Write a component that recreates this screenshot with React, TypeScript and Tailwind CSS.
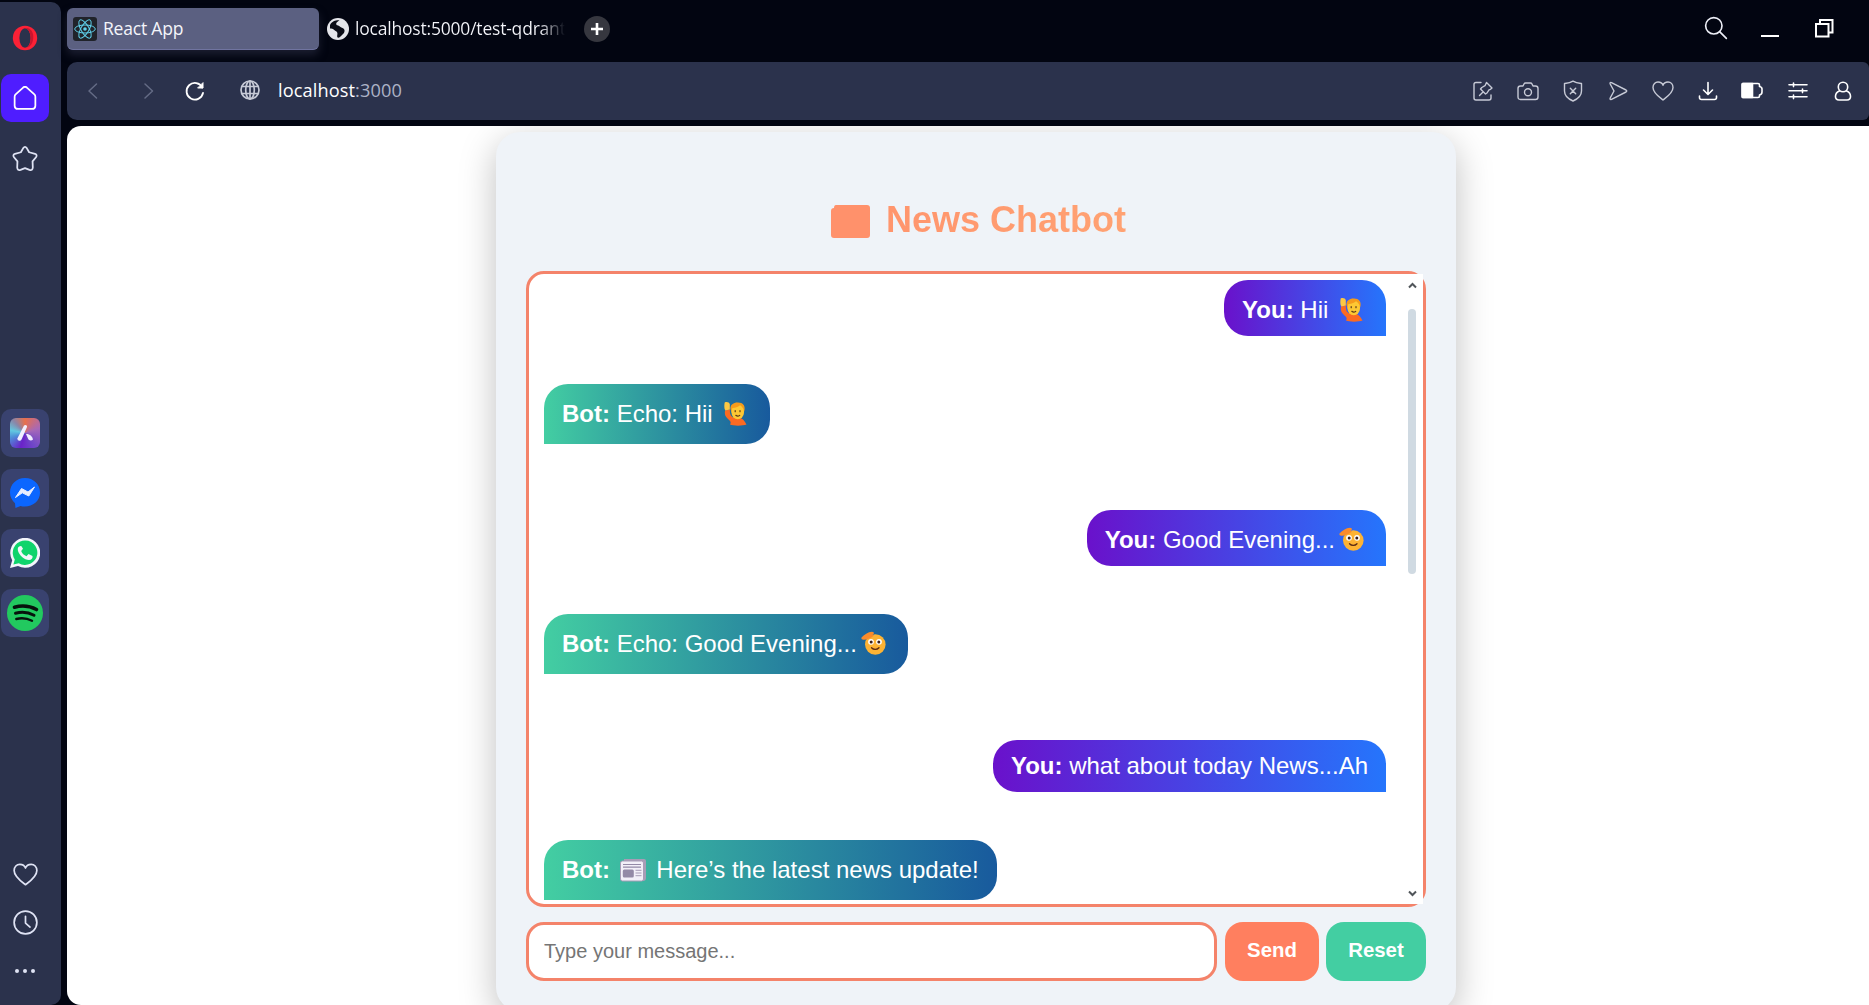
import type { ReactNode } from 'react';

type IconProps = { className?: string; size?: number; w?: number; children: ReactNode };

const Icon = ({ className = '', size = 22, w = 1.5, children }: IconProps) => (
  <svg
    className={'shrink-0 ' + className}
    width={size}
    height={size}
    viewBox="0 0 22 22"
    fill="none"
    stroke="currentColor"
    strokeWidth={w}
    strokeLinecap="round"
    strokeLinejoin="round"
  >
    {children}
  </svg>
);

const Heart = () => (
  <path d="M11 20C7.500 17.300 1 13 1 7.500C1 4.200 3.300 2 6 2C8.500 2 10.300 3.300 11 5.300C11.700 3.300 13.500 2 16 2C18.700 2 21 4.200 21 7.500C21 13 14.500 17.300 11 20Z" />
);

const OperaLogo = () => (
  <svg width="26" height="26" viewBox="0 0 26 26">
    <ellipse cx="13" cy="13" rx="12.200" ry="12.200" fill="#fb2136" />
    <ellipse cx="13" cy="13" rx="5.600" ry="9.800" fill="#2b324c" />
    <path d="M13 3.200C17 2.500 20 5 21 9C22 15 20 21 15.500 22.500C18 20 18.600 16.500 18.600 13C18.600 8.500 17 4 13 3.200Z" fill="#c9152e" />
  </svg>
);

const AriaLogo = () => (
  <div className="flex size-[30px] items-center justify-center rounded-[6px] bg-[conic-gradient(from_0deg,#e8704c,#a668b8_20%,#7048c8_40%,#6a22c8_55%,#4f8fd8_70%,#62c8e0_78%,#8a86a8_88%,#e8704c)]">
    <svg width="18" height="18" viewBox="0 0 18 18" fill="#f1efff">
      <path d="M8 1.500C9 .3 11.500 1 11 3L5.500 15.500C4.500 17.500 1 17 1.500 14.200Z" />
      <path d="M10 10C13 9.500 16.500 12 17 15.500C15.500 17.200 12.500 16.500 12 14.500Z" />
    </svg>
  </div>
);

const MessengerLogo = () => (
  <svg width="30" height="30" viewBox="0 0 30 30">
    <path d="M15 0C6.500 0 0 6.200 0 14.500C0 19 2 22.500 5 25.200L5.500 30L10.500 28C20 30.500 30 24.500 30 14.500C30 6.200 23.500 0 15 0Z" fill="#0b66ff" />
    <path d="M5.500 19.500L11.500 10.500L18 14L24.500 9L18.800 18L12.300 14.800Z" fill="#e8eeff" stroke="#e8eeff" strokeLinejoin="round" />
  </svg>
);

const WhatsAppLogo = () => (
  <svg width="30" height="30" viewBox="0 0 30 30">
    <path d="M0 30L2.200 22.300A15 15 0 1 1 8 28Z" fill="#f3f5fb" />
    <path d="M3.400 26.600L4.800 21.500A12.300 12.300 0 1 1 8.800 25.300Z" fill="#0fd46c" />
    <path d="M10.500 8C8.500 8.200 7.500 10 7.800 12C8.800 17.500 14.500 21.800 19 22C21.500 22 23 20 22.500 18L18.500 16L16.500 18.300C14 17.300 12 15.300 11.200 13L13 10.800L11.500 8.200Z" fill="#f3f5fb" />
  </svg>
);

const SpotifyLogo = () => (
  <svg width="36" height="36" viewBox="0 0 36 36" fill="none" stroke="#07130c" strokeLinecap="round">
    <circle cx="18" cy="18" r="18" fill="#22c95f" stroke="none" />
    <path d="M7.500 12.200C15 10.200 23 11 29.500 14.500" strokeWidth="3.600" />
    <path d="M8.500 18.300C15 16.500 21.500 17.300 27 20.300" strokeWidth="3" />
    <path d="M9.300 24C15 22.600 20 23.200 25 25.800" strokeWidth="2.400" />
  </svg>
);

const ReactLogo = () => (
  <svg className="shrink-0" width="24" height="24" viewBox="0 0 24 24" fill="none" stroke="#5fd0ea" strokeWidth="1">
    <rect width="24" height="24" rx="3" fill="#20232a" stroke="none" />
    <ellipse cx="12" cy="12" rx="10.300" ry="4" />
    <ellipse cx="12" cy="12" rx="10.300" ry="4" transform="rotate(60 12 12)" />
    <ellipse cx="12" cy="12" rx="10.300" ry="4" transform="rotate(120 12 12)" />
    <circle cx="12" cy="12" r="1.800" fill="#5fd0ea" stroke="none" />
  </svg>
);

const EarthIcon = () => (
  <svg className="shrink-0" width="22" height="22" viewBox="0 0 22 22">
    <circle cx="11" cy="11" r="11" fill="#e4e5ea" />
    <path d="M3 7C5 3 9 2 12.500 2.300C10 4 8.500 5 9.500 7C12 7.500 13 9 15.500 10C18.500 11 18 15 15.500 16.500C13.500 19 12 20 10.500 19.500C9.500 17.500 11.500 15.500 9.500 13.500C7 12 6.500 10.500 3 10.500Z" fill="#0a0c16" />
  </svg>
);

const Emoji = ({ children }: { children: ReactNode }) => (
  <span className="inline-flex h-6 w-[33px] items-center justify-center align-[-4px]">{children}</span>
);

const RaisingHand = () => (
  <Emoji>
    <svg className="shrink-0" width="25" height="25" viewBox="0 0 25 25">
      <path d="M2 9.500L7 8.500C6.500 12 7.500 15.500 10.500 16.500H16C20 17.500 21.500 20 23.500 23.500C20 25 10 25 7 23.500C8.500 21.500 7.500 20 5 18C2 15.500 1.500 13 2 9.500Z" fill="#fb6a22" />
      <path d="M1.700 1.500C3.500 .5 6.300 1 6.800 3.500V8.500L2.300 9.500C.8 7 1.300 3.500 1.700 1.500Z" fill="#fcc843" />
      <path d="M7.500 8C7 3.500 11 1.300 15 1.500C20 1.700 22.300 4.500 21.500 9L20 14H9.500Z" fill="#f59b1c" />
      <ellipse cx="14.700" cy="11" rx="6.300" ry="7.300" fill="#fdc834" />
      <path d="M9 7C13 7 16 5.500 17.500 3.500C19 6 20 7 21 7.500L20 3.500L13 1.800L8.500 4.500Z" fill="#f59b1c" />
      <path d="M12.200 9.500v1.200M17 9.500v1.200M12.800 14.300C14 15.300 15.700 15.300 16.700 14.300" stroke="#5b3a1a" strokeWidth="1.200" fill="none" strokeLinecap="round" />
    </svg>
  </Emoji>
);

const SaluteFace = () => (
  <Emoji>
    <svg className="shrink-0" width="25" height="25" viewBox="0 0 25 25">
      <circle cx="14.300" cy="13.500" r="10.300" fill="#fdb334" />
      <path d="M.5 6.500C3 3.500 7 1 11 .7C13.500 .8 13.500 3 11.500 3.500L13 4.500C10 7 6 9 2.500 8.800C1 8.700 0 8 .5 6.500Z" fill="#fb8b2a" />
      <circle cx="10" cy="10.800" r="2.900" fill="#fff" />
      <circle cx="18" cy="10.800" r="2.900" fill="#fff" />
      <circle cx="10.200" cy="10.900" r="1.500" fill="#3a1f1a" />
      <circle cx="17.800" cy="10.900" r="1.500" fill="#3a1f1a" />
      <path d="M10.500 16.800C12.500 19 16 19 18 16.800" stroke="#5b2a14" strokeWidth="1.300" fill="none" strokeLinecap="round" />
    </svg>
  </Emoji>
);

const Newspaper = () => (
  <Emoji>
    <svg className="shrink-0" width="26" height="24" viewBox="0 0 26 24">
      <path d="M4 1H24Q26 1 26 3V20Q26 23 23 23H3Z" fill="#a79cb6" />
      <rect x=".5" y="3" width="23" height="20" rx="2" fill="#f2eff8" stroke="#a79cb6" />
      <path d="M3 6.500H21M3 9.200H21" stroke="#9389a6" strokeWidth="1.200" />
      <rect x="2.800" y="11.500" width="11" height="8" rx="1.500" fill="#9389a6" />
      <path d="M15.500 12.300H21.500M15.500 15H21.500M15.500 17.700H21.500" stroke="#a79cb6" />
    </svg>
  </Emoji>
);

const You = ({ plain = false, children }: { plain?: boolean; children: ReactNode }) => (
  <div
    className={
      'w-fit shrink-0 self-end rounded-[24px] rounded-br-none bg-[linear-gradient(90deg,#6a11cb,#2575fc)] px-[18px] ' +
      (plain ? 'h-[52px] pt-3' : 'h-14 pt-4')
    }
  >
    <p className="whitespace-pre">
      <b>You:</b> {children}
    </p>
  </div>
);

const Bot = ({ children }: { children: ReactNode }) => (
  <div className="h-[60px] w-fit shrink-0 rounded-[24px] rounded-bl-none bg-[linear-gradient(90deg,#43cea2,#185a9d)] px-[18px] pt-4">
    <p className="whitespace-pre">
      <b>Bot:</b> {children}
    </p>
  </div>
);

const Exchange = ({ children }: { children: ReactNode }) => <div className="flex flex-col gap-12">{children}</div>;

const AppTile = ({ children }: { children: ReactNode }) => (
  <div className="flex size-12 items-center justify-center rounded-[10px] bg-[#39426f]">{children}</div>
);

const Sidebar = () => (
  <aside className="mt-0.5 flex w-[61px] shrink-0 flex-col rounded-r-[10px] bg-[#2b324c] pl-px text-[#dfe3f4]">
    <div className="flex w-12 grow flex-col items-center">
      <div className="mt-[23px]">
        <OperaLogo />
      </div>
      <div className="mt-[23px] flex size-12 items-center justify-center rounded-[10px] bg-[#4f1dff] text-white">
        <Icon size={24} w={1.6}>
          <path d="M1.500 9.800Q1.500 8.600 2.400 7.700L9.300 1.400Q11 0 12.700 1.400L19.600 7.700Q20.500 8.600 20.500 9.800V18Q20.500 21 17.500 21H4.500Q1.500 21 1.500 18Z" />
        </Icon>
      </div>
      <Icon className="mt-6" size={26} w={1.5}>
        <path d="M9.500 1.800Q11 -.2 12.500 1.800L14.500 5.300L19.500 6.600Q21.700 7.500 20.300 9.500L17.400 13L17.600 18.200Q17.400 21 14.800 20.200L11 18.700L7.200 20.200Q4.600 21 4.400 18.200L4.600 13L1.700 9.500Q.3 7.500 2.500 6.600L7.500 5.300Z" />
      </Icon>
      <div className="mt-[237px] flex flex-col gap-3">
        <AppTile>
          <AriaLogo />
        </AppTile>
        <AppTile>
          <MessengerLogo />
        </AppTile>
        <AppTile>
          <WhatsAppLogo />
        </AppTile>
        <AppTile>
          <SpotifyLogo />
        </AppTile>
      </div>
      <Icon className="mt-auto" size={25} w={1.5}>
        <Heart />
      </Icon>
      <Icon className="mt-[23px]" size={25} w={1.5}>
        <circle cx="11" cy="11" r="10" />
        <path d="M11 5.500V11.500L15 15" />
      </Icon>
      <Icon className="mt-[25px] mb-[23px]" size={22} w={0}>
        <g fill="currentColor">
          <circle cx="3" cy="11" r="2" />
          <circle cx="11" cy="11" r="2" />
          <circle cx="19" cy="11" r="2" />
        </g>
      </Icon>
    </div>
  </aside>
);

const TabBar = () => (
  <div className="flex h-[62px] shrink-0 items-start pt-2 text-[17.500px] text-[#f4f5fa]">
    <div className="flex h-[42px] w-[252px] items-center gap-[6px] rounded-[6px] border-b border-[#7074a0] bg-[#5b6081] pl-[6px] shadow-[0_5px_9px_#1b1e30]">
      <ReactLogo />
      <span className="tracking-[-0.200px]">React App</span>
    </div>
    <div className="ml-2 flex h-[42px] w-[238px] items-center gap-[6px] pb-px">
      <EarthIcon />
      <span className="overflow-hidden bg-linear-to-r from-[#f4f5fa] from-88% to-transparent bg-clip-text tracking-[-0.200px] whitespace-nowrap text-transparent">
        localhost:5000/test-qdrant
      </span>
    </div>
    <div className="mt-2 ml-[19px] flex size-[26px] items-center justify-center rounded-full bg-[#36373f]">
      <svg width="12" height="12" viewBox="0 0 12 12" stroke="#fff" strokeWidth="2.600">
        <path d="M6 0V12M0 6H12" />
      </svg>
    </div>
    <div className="mr-[35px] ml-auto flex h-10 items-center text-[#eceef6]">
      <Icon size={24} w={1.500}>
        <circle cx="9" cy="9" r="7.500" />
        <path d="M14.300 14.300L20.500 20.500" />
      </Icon>
      <div className="mt-[15px] ml-[33px] h-0.5 w-[18px] bg-white" />
      <svg className="ml-9" width="19" height="19" viewBox="0 0 19 19" fill="none" stroke="#fff" strokeWidth="2">
        <path d="M1 5H13.500V17.500H1ZM5 4V1H17.500V13.500H14.500" />
      </svg>
    </div>
  </div>
);

const AddressBar = () => (
  <div className="flex h-[58px] shrink-0 items-center rounded-[10px] rounded-r-[6px] bg-[#2b324c] pr-[15px] pl-[14px] text-[#c7cad6]">
    <Icon className="text-[#646b85]">
      <path d="M15.500 4L8 11L15.500 18" />
    </Icon>
    <Icon className="ml-[34px] text-[#646b85]">
      <path d="M8 4L15.500 11L8 18" />
    </Icon>
    <Icon className="ml-[25px] text-white" w={1.800}>
      <path d="M18.300 7.500A8.300 8.300 0 1 0 19 13" />
      <path d="M19 3V8H14Z" fill="currentColor" strokeWidth="1" />
    </Icon>
    <Icon className="mb-0.5 ml-[33px]" w={1.700}>
      <circle cx="11" cy="11" r="9" />
      <ellipse cx="11" cy="11" rx="4.300" ry="9" />
      <path d="M3 7.500H19M3 14.500H19M11 2V20" />
    </Icon>
    <span className="ml-[17px] text-[18.200px] tracking-[0.100px] text-[#adb2c6]">
      <span className="text-white">localhost</span>:3000
    </span>
    <div className="ml-auto flex items-center gap-[23px]">
      <Icon w={1.400}>
        <path d="M9 2.500H4Q2 2.500 2 4.500V18Q2 20 4 20H17Q19 20 19 18V15" />
        <path d="M7.500 15.500L11 12M14.500 2.500L20 8L18.500 9.300L17 9.800L15 13L13.500 14L8.500 9L9.800 7.500L13 5.700Z" />
      </Icon>
      <Icon w={1.400}>
        <path d="M3.500 6H6L7 4Q7.500 3 8.500 3H13.500Q14.500 3 15 4L16 6H18.500Q21 6 21 8.500V17Q21 19.500 18.500 19.500H3.500Q1 19.500 1 17V8.500Q1 6 3.500 6Z" />
        <circle cx="11" cy="12.300" r="3.500" />
      </Icon>
      <Icon w={1.400}>
        <path d="M11 1.200C14 3.200 16.500 3.300 19.500 3.500V11C19.500 16 15 19.300 11 21C7 19.300 2.500 16 2.500 11V3.500C5.500 3.300 8 3.200 11 1.200ZM8.300 8.300L13.700 13.700M13.700 8.300L8.300 13.700" />
      </Icon>
      <Icon w={1.400}>
        <path d="M4.500 2.700L19 10Q20.500 11 19 12L4.500 19.300Q2.500 20 3.200 18L7 11L3.200 4Q2.500 2 4.500 2.700Z" />
      </Icon>
      <Icon w={1.400}>
        <Heart />
      </Icon>
      <Icon className="text-white" w={1.600}>
        <path d="M11 2.500V14M6.500 10L11 14.500L15.500 10M2.500 16V17.500Q2.500 19.500 4.500 19.500H17.500Q19.500 19.500 19.500 17.500V16" />
      </Icon>
      <Icon className="-translate-x-px text-white" w={1.600}>
        <path d="M2 3.500H17Q18.500 3.500 18.500 5V6.500Q21 7 21 9V12Q21 14.500 18.500 15V16Q18.500 17.500 17 17.500H2Q1 17.500 1 16.500V4.500Q1 3.500 2 3.500Z" />
        <path d="M1.500 3.500H11.500V17.500H1.500Z" fill="currentColor" />
      </Icon>
      <Icon className="text-white" w={1.600}>
        <path d="M2 4.800H20M2 10.800H20M2 16.800H20M6.500 3V6.600M15.500 9V12.600M6.500 15V18.600" />
      </Icon>
      <Icon className="text-white" w={1.600}>
        <circle cx="11" cy="7" r="4.700" />
        <path d="M7.300 11C2.500 13 2 20 7 20H15C20 20 19.500 13 14.700 11" />
      </Icon>
    </div>
  </div>
);

const Chatbot = () => (
  <div className="flex h-[879px] w-[960px] flex-col rounded-[24px] bg-[#eff3f8] px-[30px] pt-[66px] shadow-[0_10px_36px_rgba(0,0,0,0.25)]">
    <h1 className="flex h-[42px] items-center justify-center text-[36px] leading-[42px] font-bold">
      <svg className="mt-[5px] mr-4 ml-[5px]" width="39" height="33" viewBox="0 0 39 33" fill="#ff916b">
        <path d="M5 0H36Q39 0 39 3V30Q39 33 36 33H3Q0 33 0 30V6Q0 3 3 3Q3 0 5 0Z" />
      </svg>
      <span className="mt-0.5 bg-linear-to-r from-[#ff956d] to-[#ffa273] bg-clip-text text-transparent">News Chatbot</span>
    </h1>
    <div className="relative mt-[31px] h-[636px] rounded-[18px] border-[3px] border-[#f4836a] bg-white">
      <div className="flex h-full flex-col gap-[66px] overflow-hidden pt-[6px] pr-[37px] pl-[15px] text-[24px] leading-[28px] text-white">
        <Exchange>
          <You>
            Hii <RaisingHand />
          </You>
          <Bot>
            Echo: Hii <RaisingHand />
          </Bot>
        </Exchange>
        <Exchange>
          <You>
            Good Evening...
            <SaluteFace />
          </You>
          <Bot>
            Echo: Good Evening...
            <SaluteFace />
          </Bot>
        </Exchange>
        <Exchange>
          <You plain>what about today News...Ah</You>
          <Bot>
            <Newspaper /> Here’s the latest news update!
          </Bot>
        </Exchange>
      </div>
      <div className="absolute inset-y-0 right-0 flex w-[22px] flex-col items-center bg-white">
        <svg className="mt-[8px]" width="9" height="7" viewBox="0 0 9 7" fill="none" stroke="#505559" strokeWidth="2">
          <path d="M1 5.500L4.500 2L8 5.500" />
        </svg>
        <div className="mt-5 h-[265px] w-2 rounded-full bg-[#d0dae2]" />
        <svg className="mt-auto mb-[7px]" width="9" height="7" viewBox="0 0 9 7" fill="none" stroke="#505559" strokeWidth="2">
          <path d="M1 1.500L4.500 5L8 1.500" />
        </svg>
      </div>
    </div>
    <div className="mt-[15px] flex h-[59px] text-[20.400px]">
      <input
        className="w-[691px] rounded-[18px] border-[3px] border-[#f4836a] bg-white px-[15px] pb-0.5 text-[20px] placeholder:text-[#757575]"
        placeholder="Type your message..."
      />
      <button className="ml-2 w-[94px] rounded-[18px] bg-[#ff7f5f] pb-0.5 font-bold text-white">Send</button>
      <button className="ml-[7px] w-[100px] rounded-[18px] bg-[#43cea2] pb-0.5 font-bold text-white">Reset</button>
    </div>
  </div>
);

export default function App() {
  return (
    <div className="flex h-[1005px] w-full overflow-hidden bg-[#020511] font-['Open_Sans',sans-serif]">
      <Sidebar />
      <div className="ml-[6px] flex min-w-0 grow flex-col">
        <TabBar />
        <AddressBar />
        <main className="mt-[6px] flex min-h-0 grow items-start justify-center overflow-hidden rounded-l-[14px] bg-white pt-[6px] pl-4 font-['Liberation_Sans',Arial,sans-serif]">
          <Chatbot />
        </main>
      </div>
    </div>
  );
}
